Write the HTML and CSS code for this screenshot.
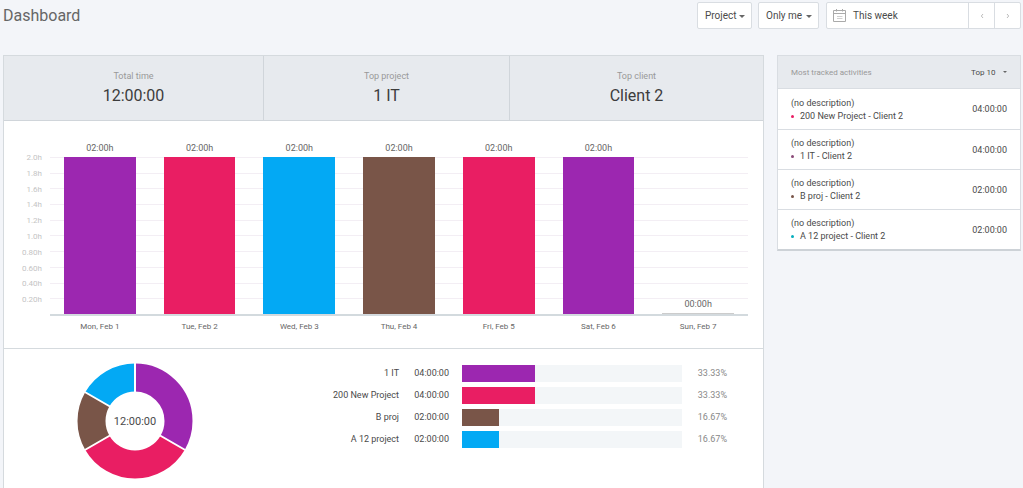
FILE: index.html
```html
<!DOCTYPE html>
<html lang="en">
<head>
<meta charset="utf-8">
<meta name="viewport" content="width=device-width, initial-scale=1">
<title>Dashboard</title>
<link rel="stylesheet" href="styles.css">
</head>
<body>
<div class="page">
  <header class="topbar">
    <h1 class="title">Dashboard</h1>
    <div class="filters">
      <span class="dropdown"><select class="dropdown-select project-select" aria-label="Group by"><option>Project</option></select></span>
      <span class="dropdown"><select class="dropdown-select team-select" aria-label="Team"><option>Only me</option></select></span>
      <div class="date-range">
        <button class="date-button" type="button">
          <svg class="calendar" viewBox="0 0 13 13" aria-hidden="true">
            <path d="M.5 1.5h12v11H.5zM.5 4.5h12M3.5 0v2.500M9.500 0v2.500"/>
            <path class="calendar-days" d="M4 7.500h5.500M4 9.500h5.500"/>
          </svg>
          This week
        </button>
        <button class="step" type="button" aria-label="Previous"><svg class="chevron" viewBox="0 0 4 6" aria-hidden="true"><path d="M3 1 1.300 3 3 5"/></svg></button>
        <button class="step" type="button" aria-label="Next"><svg class="chevron" viewBox="0 0 4 6" aria-hidden="true"><path d="M1 1 2.700 3 1 5"/></svg></button>
      </div>
    </div>
  </header>

  <div class="content">
    <main class="report">
      <dl class="summary">
        <div class="summary-item"><dt>Total time</dt><dd>12:00:00</dd></div>
        <div class="summary-item"><dt>Top project</dt><dd>1 IT</dd></div>
        <div class="summary-item"><dt>Top client</dt><dd>Client 2</dd></div>
      </dl>

      <section class="chart" aria-label="Time per day">
        <div class="axis">
          <span>2.0h</span><span>1.8h</span><span>1.6h</span><span>1.4h</span><span>1.2h</span>
          <span>1.0h</span><span>0.80h</span><span>0.60h</span><span>0.40h</span><span>0.20h</span>
        </div>
        <div class="plot">
          <div class="gridlines"><i></i><i></i><i></i><i></i><i></i><i></i><i></i><i></i><i></i><i></i></div>
          <div class="bars">
            <div class="day"><span>02:00h</span><div class="bar purple" style="height:157px"></div></div>
            <div class="day"><span>02:00h</span><div class="bar pink" style="height:157px"></div></div>
            <div class="day"><span>02:00h</span><div class="bar blue" style="height:157px"></div></div>
            <div class="day"><span>02:00h</span><div class="bar brown" style="height:157px"></div></div>
            <div class="day"><span>02:00h</span><div class="bar pink" style="height:157px"></div></div>
            <div class="day"><span>02:00h</span><div class="bar purple" style="height:157px"></div></div>
            <div class="day"><span>00:00h</span><div class="bar empty" style="height:1px"></div></div>
          </div>
        </div>
        <div class="dates">
          <span>Mon, Feb 1</span><span>Tue, Feb 2</span><span>Wed, Feb 3</span><span>Thu, Feb 4</span><span>Fri, Feb 5</span><span>Sat, Feb 6</span><span>Sun, Feb 7</span>
        </div>
      </section>

      <section class="breakdown" aria-label="Time per project">
        <div class="donut">
          <svg class="donut-chart" viewBox="-58 -58 116 116" aria-hidden="true">
            <g class="ring" transform="rotate(-90)">
              <circle class="stroke-purple" r="43.500" pathLength="360" stroke-dasharray="120 240"/>
              <circle class="stroke-pink" r="43.500" pathLength="360" stroke-dasharray="120 240" stroke-dashoffset="-120"/>
              <circle class="stroke-brown" r="43.500" pathLength="360" stroke-dasharray="60 300" stroke-dashoffset="-240"/>
              <circle class="stroke-blue" r="43.500" pathLength="360" stroke-dasharray="60 300" stroke-dashoffset="-300"/>
            </g>
            <path class="dividers" d="M0-28V-58M24.200 14 50.200 29M-24.200 14-50.200 29M-24.200-14-50.200-29"/>
          </svg>
          <span class="donut-total">12:00:00</span>
        </div>
        <table class="projects">
          <tbody>
            <tr><th scope="row">1 IT</th><td class="time">04:00:00</td><td class="meter"><div class="track"><div class="fill purple" style="width:33.33%"></div></div></td><td class="percent">33.33%</td></tr>
            <tr><th scope="row">200 New Project</th><td class="time">04:00:00</td><td class="meter"><div class="track"><div class="fill pink" style="width:33.33%"></div></div></td><td class="percent">33.33%</td></tr>
            <tr><th scope="row">B proj</th><td class="time">02:00:00</td><td class="meter"><div class="track"><div class="fill brown" style="width:16.67%"></div></div></td><td class="percent">16.67%</td></tr>
            <tr><th scope="row">A 12 project</th><td class="time">02:00:00</td><td class="meter"><div class="track"><div class="fill blue" style="width:16.67%"></div></div></td><td class="percent">16.67%</td></tr>
          </tbody>
        </table>
      </section>
    </main>

    <aside class="activities">
      <div class="activities-head">
        <h2>Most tracked activities</h2>
        <span class="dropdown dropdown-plain"><select class="dropdown-select top-select" aria-label="Number of activities"><option>Top 10</option></select></span>
      </div>
      <ul class="activity-list">
        <li><div><p>(no description)</p><p class="activity-project"><i class="dot pink"></i>200 New Project - Client 2</p></div><span>04:00:00</span></li>
        <li><div><p>(no description)</p><p class="activity-project"><i class="dot plum"></i>1 IT - Client 2</p></div><span>04:00:00</span></li>
        <li><div><p>(no description)</p><p class="activity-project"><i class="dot brown"></i>B proj - Client 2</p></div><span>02:00:00</span></li>
        <li><div><p>(no description)</p><p class="activity-project"><i class="dot cyan"></i>A 12 project - Client 2</p></div><span>02:00:00</span></li>
      </ul>
    </aside>
  </div>
</div>
</body>
</html>
```

FILE: styles.css
```css
* { box-sizing: border-box; }

body {
  margin: 0;
  background: #f3f5f9;
  color: #4a4a4a;
  font-family: Roboto, "Liberation Sans", sans-serif;
  font-size: 9px;
  line-height: 13px;
}

h1, h2, p, dl, dd, ul { margin: 0; padding: 0; font-weight: 400; }
ul { list-style: none; }
button, select { font: inherit; color: inherit; }

.purple { background: #9c27b0; }
.pink { background: #e91e63; }
.blue { background: #03a9f4; }
.brown { background: #795548; }
.plum { background: #8a4a78; }
.cyan { background: #06aebd; }

.page {
  display: flex;
  flex-direction: column;
  min-height: 100vh;
  padding: 2px 2px 0 3px;
}

/* Header */
.topbar {
  display: flex;
  justify-content: space-between;
  align-items: center;
  height: 27px;
  margin-bottom: 26px;
}
.title { font-size: 16px; line-height: 20px; color: #666; }
.filters { display: flex; gap: 6px; height: 27px; }

.dropdown { position: relative; display: flex; }
.dropdown::after {
  content: "";
  position: absolute;
  right: 7px;
  top: 50%;
  margin-top: -1px;
  border: 3px solid transparent;
  border-top-color: #666;
  border-bottom: 0;
  pointer-events: none;
}
.dropdown-select {
  appearance: none;
  padding: 0 7px;
  border: 1px solid #d9dde2;
  border-radius: 2px;
  background: #fff;
  font-size: 10px;
}
.project-select { width: 55px; }
.team-select { width: 61px; }

.date-range {
  display: flex;
  margin-left: 1px;
  border: 1px solid #d9dde2;
  border-radius: 2px;
  background: #fff;
}
.date-button {
  display: flex;
  align-items: center;
  gap: 7px;
  width: 141px;
  padding: 0 6px;
  border: 0;
  background: none;
  font-size: 10px;
}
.calendar { width: 13px; height: 13px; fill: none; stroke: #aaa; }
.calendar-days { stroke: #d0d0d0; }
.step {
  display: flex;
  align-items: center;
  justify-content: center;
  width: 26px;
  padding: 0;
  border: 0;
  border-left: 1px solid #d9dde2;
  background: none;
}
.chevron { width: 4px; height: 6px; fill: none; stroke: #bbb; }

/* Columns */
.content {
  flex: 1;
  display: grid;
  grid-template-columns: minmax(0, 1fr) 244px;
  gap: 13px;
}
.report {
  border: 1px solid #d5dade;
  border-bottom: 0;
  background: #fff;
}

.summary {
  display: grid;
  grid-template-columns: 259fr 246fr 254fr;
  border-bottom: 1px solid #d0d5da;
  background: #e7eaee;
  text-align: center;
}
.summary-item { padding: 14px 0 13px; }
.summary-item + .summary-item { border-left: 1px solid #d0d5da; }
.summary dt { color: #999; }
.summary dd { margin-top: 1px; font-size: 16px; line-height: 23px; color: #3c3c3c; }

/* Daily chart */
.chart {
  display: grid;
  grid-template-columns: 38px minmax(0, 1fr);
  column-gap: 8px;
  padding: 21px 15px 15px 0;
  border-bottom: 1px solid #d5dade;
}
.axis {
  display: grid;
  grid-auto-rows: 1fr;
  height: 158px;
  margin-top: 9px;
  text-align: right;
  color: #c4c4c4;
  font-size: 8px;
}
.plot { display: grid; height: 174px; border-bottom: 2px solid #d3dade; }
.gridlines, .bars { grid-area: 1 / 1; }
.gridlines {
  display: grid;
  grid-auto-rows: 1fr;
  height: 157px;
  margin-top: 15px;
}
.gridlines i { border-top: 1px solid #f3eef4; }
.bars { display: flex; align-items: flex-end; }
.day { flex: 1; text-align: center; color: #666; }
.day span { display: block; padding-bottom: 2px; }
.bar { width: 72%; margin: 0 auto; }
.empty { background: #ccc; }
.dates {
  grid-column: 2;
  display: flex;
  padding-top: 4px;
  text-align: center;
  color: #666;
  font-size: 8px;
}
.dates span { flex: 1; }

/* Project breakdown */
.breakdown {
  display: flex;
  justify-content: space-between;
  align-items: flex-start;
  padding: 14px 36px 0 73px;
}
.donut { display: grid; place-items: center; }
.donut > * { grid-area: 1 / 1; }
.donut-chart { width: 116px; height: 116px; }
.ring { fill: none; stroke-width: 28; }
.stroke-purple { stroke: #9c27b0; }
.stroke-pink { stroke: #e91e63; }
.stroke-brown { stroke: #795548; }
.stroke-blue { stroke: #03a9f4; }
.dividers { stroke: #fff; stroke-width: 2; }
.donut-total { font-size: 11px; }

.projects {
  margin-top: 2px;
  border-collapse: collapse;
  line-height: 17px;
  text-align: right;
}
.projects th, .projects td { padding: 0 0 5px; font-weight: 400; vertical-align: top; }
.projects .time { width: 50px; }
.projects .meter { width: 247px; padding: 0 14px 5px 13px; }
.track { height: 17px; background: #f3f6f8; }
.fill { height: 100%; }
.projects .percent { width: 31px; color: #888; }

/* Activities */
.activities {
  align-self: start;
  border: 1px solid #d9dde2;
  border-bottom: 2px solid #cdd2d7;
  background: #fff;
}
.activities-head {
  display: flex;
  align-items: center;
  justify-content: space-between;
  height: 33px;
  padding: 0 13px;
  border-bottom: 1px solid #d9dde2;
  background: #e7eaee;
}
.activities-head h2 { font-size: 8px; color: #999; }
.dropdown-plain::after { right: 0; border-width: 2px 2px 0; }
.top-select {
  width: 36px;
  padding: 0;
  border: 0;
  background: none;
  font-size: 8px;
}
.activity-list li {
  display: flex;
  align-items: center;
  justify-content: space-between;
  min-height: 40px;
  padding: 1px 13px 0;
}
.activity-list li + li { border-top: 1px solid #d9dde2; }
.activity-project { display: flex; align-items: center; gap: 6px; }
.dot { width: 3px; height: 3px; border-radius: 50%; }
```
